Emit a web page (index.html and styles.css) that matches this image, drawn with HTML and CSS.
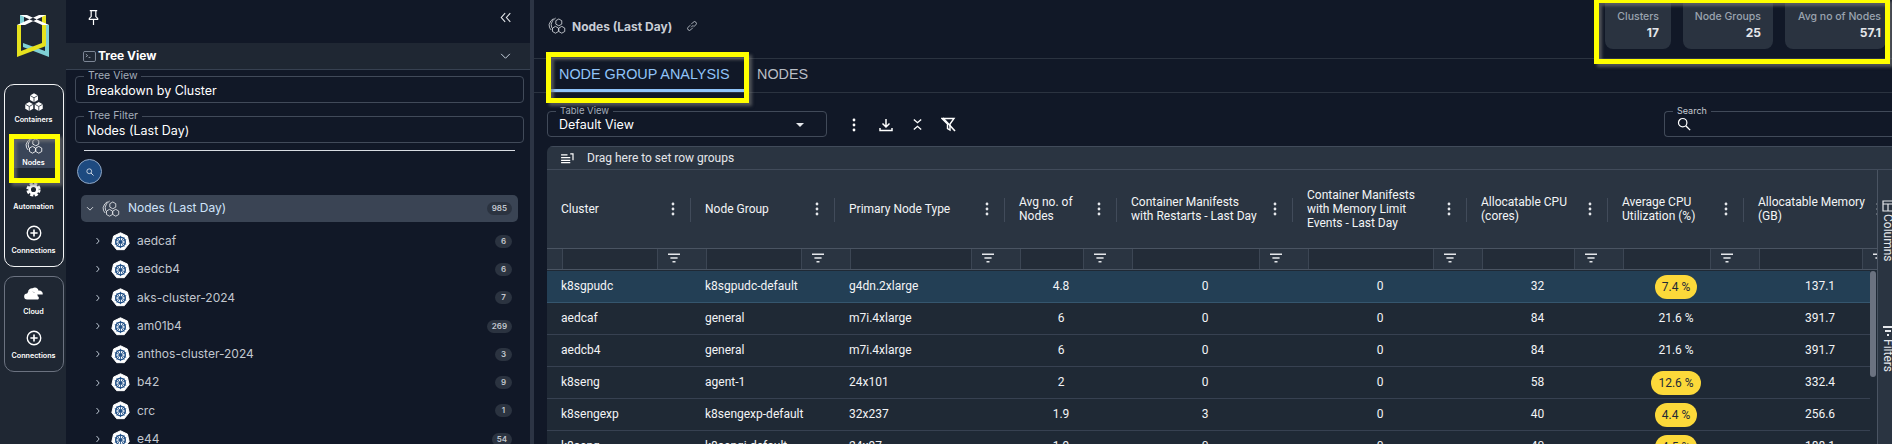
FILE: index.html
```html
<!DOCTYPE html>
<html lang="en">
<head>
<meta charset="utf-8">
<title>Nodes (Last Day)</title>
<link rel="stylesheet" href="styles.css">
</head>
<body>
<svg class="defs" width="0" height="0" aria-hidden="true">
  <symbol id="nodes" viewBox="0 0 20 20">
    <g fill="none" stroke="currentColor" stroke-width=".95">
      <path d="M6 1.800 3 4.500 1.200 8.500l.6 3.500 1.800 2.500"/>
      <path d="M8.500 1.200 5.200 3.800 3.500 8l.5 3.500 1.500 1.800"/>
      <path d="M12 2.200l3.300 1.900v3.800L12 9.800 8.700 7.900V4.100z"/>
      <path d="M8.300 10.400l3.300 1.900v3.800l-3.300 1.900L5 16.100v-3.800z"/>
      <path d="M15.300 10.400l3.300 1.900v3.800l-3.300 1.900-3.300-1.900v-3.800z"/>
    </g>
  </symbol>
  <symbol id="kube" viewBox="0 0 20 20">
    <path d="M10 .8 17.300 4.300 19.100 12.200 14 18.600H6L.9 12.200 2.700 4.300z" fill="#fff" stroke="#fff" stroke-linejoin="round"/>
    <g fill="none" stroke="#1f4e85">
      <circle cx="10" cy="10.500" r="5" stroke-width="1.600"/>
      <path d="M10 4v13M4 8l12 5M16 8 4 13M6 15.500l8-10M14 15.500l-8-10" stroke-width=".9"/>
    </g>
    <circle cx="10" cy="10.500" r="1.500" fill="#1f4e85"/>
  </symbol>
  <symbol id="plus" viewBox="0 0 20 20">
    <circle cx="10" cy="10" r="7.500" fill="none" stroke="currentColor" stroke-width="1.500"/>
    <path d="M10 6v8M6 10h8" stroke="currentColor" stroke-width="1.800"/>
  </symbol>
  <symbol id="dots" viewBox="0 0 4 14"><circle cx="2" cy="2" r="1.400" fill="currentColor"/><circle cx="2" cy="7" r="1.400" fill="currentColor"/><circle cx="2" cy="12" r="1.400" fill="currentColor"/></symbol>
  <symbol id="funnel" viewBox="0 0 12 10"><path d="M0 .5h12v1.600H0zM2.400 4.200h7.200v1.600H2.400zM4.500 7.900h3v1.600h-3z" fill="currentColor"/></symbol>
  <symbol id="chev-r" viewBox="0 0 8 10"><path d="M2 1l3.500 4L2 9" fill="none" stroke="currentColor" stroke-width="1.200"/></symbol>
  <symbol id="search" viewBox="0 0 16 16"><circle cx="6.500" cy="6.500" r="4.800" fill="none" stroke="currentColor" stroke-width="1.400"/><path d="M10 10l5 5" stroke="currentColor" stroke-width="1.600"/></symbol>
  <g id="cube">
    <path d="M0-4.800 4.200-2.400V2.400L0 4.800-4.200 2.400V-2.400z" fill="#fff"/>
    <path d="M0 0-4.200-2.400M0 0 4.200-2.400M0 0V4.800" stroke="#1f2733" stroke-width=".8" fill="none"/>
  </g>
</svg>

<nav class="rail">
  <svg class="logo" viewBox="0 0 32 43" width="32" height="43">
    <path d="M3 1h4v10H3zM28 10l4 1v32L6 33v-4l22 8z" fill="#7fd0d6"/>
    <path d="M0 11l4-1v27l21-8V1h4v31L0 43z" fill="#e6e21e"/>
    <path d="M3 1h7l22 10h-7zM29 1h-7L0 11h8z" fill="#fff"/>
  </svg>
  <div class="rail-box rail-box-main">
    <a class="rail-item rail-item-first">
      <svg class="rail-ico" viewBox="0 0 20 20" width="20" height="19">
        <use href="#cube" x="10" y="5"/>
        <use href="#cube" x="5" y="14.200"/>
        <use href="#cube" x="15" y="14.200"/>
      </svg>
      <span>Containers</span>
    </a>
    <a class="rail-item rail-item-on">
      <svg class="rail-ico" width="18" height="18"><use href="#nodes"/></svg>
      <span>Nodes</span>
    </a>
    <a class="rail-item rail-item-gear">
      <svg class="rail-ico" viewBox="0 0 20 20" width="15" height="15"><circle cx="10" cy="10" r="5.200" fill="none" stroke="#fff" stroke-width="3.600"/><circle cx="10" cy="10" r="8" fill="none" stroke="#fff" stroke-width="3" stroke-dasharray="4.200 2.080"/></svg>
      <span>Automation</span>
    </a>
    <a class="rail-item">
      <svg class="rail-ico" width="18" height="18"><use href="#plus"/></svg>
      <span>Connections</span>
    </a>
  </div>
  <div class="rail-box rail-box-sub">
    <a class="rail-item">
      <svg class="rail-ico" viewBox="0 0 20 16" width="19" height="15"><path d="M4 7.500A4.500 4.500 0 0 1 9 3.500 4 4 0 0 1 15.500 6 3.500 3.500 0 0 1 19.800 10H12A5 5 0 0 0 4 7.500z" fill="#fff"/><path d="M3.200 15.500a3.200 3.200 0 0 1 0-6.400 4 4 0 0 1 7.500-.5 3.500 3.500 0 0 1 3.800 3.400 2 2 0 0 1 .4 3.500z" fill="#fff"/></svg>
      <span>Cloud</span>
    </a>
    <a class="rail-item">
      <svg class="rail-ico" width="18" height="18"><use href="#plus"/></svg>
      <span>Connections</span>
    </a>
  </div>
</nav>

<aside class="tree">
  <div class="tree-top">
    <svg viewBox="0 0 14 18" width="13" height="17"><path d="M3 1.500h8M4.500 1.500v6.500L2.500 10v1h9v-1L9.500 8V1.500M7 11v6" fill="none" stroke="#fff" stroke-width="1.300"/></svg>
    <svg viewBox="0 0 14 12" width="12" height="11"><path d="M6 1 1.500 6 6 11M12 1 7.500 6 12 11" fill="none" stroke="#e5e7eb" stroke-width="1.300"/></svg>
  </div>
  <div class="tree-head">
    <svg viewBox="0 0 14 12" width="13" height="11"><rect x=".5" y=".5" width="13" height="11" rx="1.500" fill="none" stroke="#8a94a3"/><path d="M3 3.500 5 5 3 6.500M6 7h2" fill="none" stroke="#b4bcc8" stroke-width=".8"/></svg>
    <strong>Tree View</strong>
    <svg class="tree-head-chev" viewBox="0 0 12 8" width="11" height="7"><path d="M1 1l5 5 5-5" fill="none" stroke="#cbd5e1" stroke-width="1.100"/></svg>
  </div>
  <fieldset class="field tree-field"><legend>Tree View</legend>Breakdown by Cluster</fieldset>
  <fieldset class="field tree-field tree-field-2"><legend>Tree Filter</legend>Nodes (Last Day)</fieldset>
  <hr class="tree-rule">
  <button class="tree-search" aria-label="Search"><svg width="8" height="8"><use href="#search"/></svg></button>
  <div class="tree-root">
    <svg class="tree-root-chev" viewBox="0 0 10 8" width="8" height="6"><path d="M1 1.500l4 4 4-4" fill="none" stroke="#d1d5db" stroke-width="1.300"/></svg>
    <svg class="tree-root-ico" width="18" height="18"><use href="#nodes"/></svg>
    <span class="tree-label">Nodes (Last Day)</span>
    <span class="badge">985</span>
  </div>
  <ul class="tree-list">
    <li><svg class="tree-chev" width="6" height="8"><use href="#chev-r"/></svg><svg class="kube" width="19" height="19"><use href="#kube"/></svg><span class="tree-label">aedcaf</span><span class="badge">6</span></li>
    <li><svg class="tree-chev" width="6" height="8"><use href="#chev-r"/></svg><svg class="kube" width="19" height="19"><use href="#kube"/></svg><span class="tree-label">aedcb4</span><span class="badge">6</span></li>
    <li><svg class="tree-chev" width="6" height="8"><use href="#chev-r"/></svg><svg class="kube" width="19" height="19"><use href="#kube"/></svg><span class="tree-label">aks-cluster-2024</span><span class="badge">7</span></li>
    <li><svg class="tree-chev" width="6" height="8"><use href="#chev-r"/></svg><svg class="kube" width="19" height="19"><use href="#kube"/></svg><span class="tree-label">am01b4</span><span class="badge">269</span></li>
    <li><svg class="tree-chev" width="6" height="8"><use href="#chev-r"/></svg><svg class="kube" width="19" height="19"><use href="#kube"/></svg><span class="tree-label">anthos-cluster-2024</span><span class="badge">3</span></li>
    <li><svg class="tree-chev" width="6" height="8"><use href="#chev-r"/></svg><svg class="kube" width="19" height="19"><use href="#kube"/></svg><span class="tree-label">b42</span><span class="badge">9</span></li>
    <li><svg class="tree-chev" width="6" height="8"><use href="#chev-r"/></svg><svg class="kube" width="19" height="19"><use href="#kube"/></svg><span class="tree-label">crc</span><span class="badge">1</span></li>
    <li><svg class="tree-chev" width="6" height="8"><use href="#chev-r"/></svg><svg class="kube" width="19" height="19"><use href="#kube"/></svg><span class="tree-label">e44</span><span class="badge">54</span></li>
  </ul>
</aside>

<main class="main">
  <header class="topbar">
    <svg class="title-ico" width="18" height="18"><use href="#nodes"/></svg>
    <h1>Nodes (Last Day)</h1>
    <svg class="link-ico" viewBox="0 0 14 14" width="12" height="12"><path d="M6 8.500 8.500 6M5 6 2.500 8.500a2 2 0 0 0 3 3L8 9M6 5l2.500-2.500a2 2 0 0 1 3 3L9 8" fill="none" stroke="#c4cad3" stroke-width="1"/></svg>
    <div class="stats">
      <div class="stat"><span>Clusters</span><b>17</b></div>
      <div class="stat stat-groups"><span>Node Groups</span><b>25</b></div>
      <div class="stat stat-avg"><span>Avg no of Nodes</span><b>57.1</b></div>
    </div>
  </header>
  <div class="tabs">
    <a class="tab tab-on">NODE GROUP ANALYSIS</a>
    <a class="tab">NODES</a>
  </div>
  <div class="toolbar">
    <fieldset class="field view-field"><legend>Table View</legend>Default View<i class="caret"></i></fieldset>
    <div class="tools">
      <svg width="4" height="14"><use href="#dots"/></svg>
      <svg viewBox="0 0 14 14" width="14" height="14"><path d="M7 1v7M3.500 5.500 7 9l3.500-3.500M1 10v2.500h12V10" fill="none" stroke="#fff" stroke-width="1.500"/></svg>
      <svg viewBox="0 0 12 14" width="11" height="13"><path d="M2 1.500l4 3.500 4-3.500M2 12.500 6 9l4 3.500" fill="none" stroke="#fff" stroke-width="1.500"/></svg>
      <svg viewBox="0 0 15 15" width="15" height="15"><path d="M1 1.500h12L9 7v6L6.500 11.500V7z" fill="none" stroke="#fff" stroke-width="1.400"/><path d="M2 1l12 13" stroke="#fff" stroke-width="1.600"/></svg>
    </div>
    <fieldset class="field search-field"><legend>Search</legend><svg width="14" height="14"><use href="#search"/></svg></fieldset>
  </div>
  <section class="grid">
    <div class="grid-group">
      <svg viewBox="0 0 14 12" width="13" height="11"><path d="M0 2h7M0 5h10M0 8h10M0 10.500h10" stroke="#fff" stroke-width="1.300"/><path d="M10 1h3v7" fill="none" stroke="#fff" stroke-width="1.300"/></svg>
      <span>Drag here to set row groups</span>
    </div>
    <div class="grid-wrap">
      <div class="grid-table">
        <div class="cols grid-head">
          <div class="hcell"><span>Cluster</span><svg width="4" height="14"><use href="#dots"/></svg></div>
          <div class="hcell"><span>Node Group</span><svg width="4" height="14"><use href="#dots"/></svg></div>
          <div class="hcell"><span>Primary Node Type</span><svg width="4" height="14"><use href="#dots"/></svg></div>
          <div class="hcell"><span>Avg no. of<br>Nodes</span><svg width="4" height="14"><use href="#dots"/></svg></div>
          <div class="hcell"><span>Container Manifests<br>with Restarts - Last Day</span><svg width="4" height="14"><use href="#dots"/></svg></div>
          <div class="hcell"><span>Container Manifests<br>with Memory Limit<br>Events - Last Day</span><svg width="4" height="14"><use href="#dots"/></svg></div>
          <div class="hcell"><span>Allocatable CPU<br>(cores)</span><svg width="4" height="14"><use href="#dots"/></svg></div>
          <div class="hcell"><span>Average CPU<br>Utilization (%)</span><svg width="4" height="14"><use href="#dots"/></svg></div>
          <div class="hcell"><span>Allocatable Memory<br>(GB)</span><svg width="4" height="14"><use href="#dots"/></svg></div>
        </div>
        <div class="cols grid-filter">
          <div class="fcell"><i></i><b><svg width="12" height="10"><use href="#funnel"/></svg></b></div>
          <div class="fcell"><i></i><b><svg width="12" height="10"><use href="#funnel"/></svg></b></div>
          <div class="fcell"><i></i><b><svg width="12" height="10"><use href="#funnel"/></svg></b></div>
          <div class="fcell"><i></i><b><svg width="12" height="10"><use href="#funnel"/></svg></b></div>
          <div class="fcell"><i></i><b><svg width="12" height="10"><use href="#funnel"/></svg></b></div>
          <div class="fcell"><i></i><b><svg width="12" height="10"><use href="#funnel"/></svg></b></div>
          <div class="fcell"><i></i><b><svg width="12" height="10"><use href="#funnel"/></svg></b></div>
          <div class="fcell"><i></i><b><svg width="12" height="10"><use href="#funnel"/></svg></b></div>
          <div class="fcell"><i></i><b><svg width="12" height="10"><use href="#funnel"/></svg></b></div>
        </div>
        <div class="grid-body">
          <div class="rows">
            <div class="cols row row-on"><span>k8sgpudc</span><span>k8sgpudc-default</span><span>g4dn.2xlarge</span><span class="num">4.8</span><span class="num">0</span><span class="num">0</span><span class="num">32</span><span class="num"><em class="pill">7.4 %</em></span><span class="num">137.1</span></div>
            <div class="cols row"><span>aedcaf</span><span>general</span><span>m7i.4xlarge</span><span class="num">6</span><span class="num">0</span><span class="num">0</span><span class="num">84</span><span class="num">21.6 %</span><span class="num">391.7</span></div>
            <div class="cols row"><span>aedcb4</span><span>general</span><span>m7i.4xlarge</span><span class="num">6</span><span class="num">0</span><span class="num">0</span><span class="num">84</span><span class="num">21.6 %</span><span class="num">391.7</span></div>
            <div class="cols row"><span>k8seng</span><span>agent-1</span><span>24x101</span><span class="num">2</span><span class="num">0</span><span class="num">0</span><span class="num">58</span><span class="num"><em class="pill">12.6 %</em></span><span class="num">332.4</span></div>
            <div class="cols row"><span>k8sengexp</span><span>k8sengexp-default</span><span>32x237</span><span class="num">1.9</span><span class="num">3</span><span class="num">0</span><span class="num">40</span><span class="num"><em class="pill">4.4 %</em></span><span class="num">256.6</span></div>
            <div class="cols row"><span>k8seng</span><span>k8sengi-default</span><span>24x97</span><span class="num">1.9</span><span class="num">0</span><span class="num">0</span><span class="num">40</span><span class="num"><em class="pill">4.5 %</em></span><span class="num">188.1</span></div>
          </div>
          <div class="scroll"><i></i></div>
        </div>
      </div>
      <div class="side">
        <div class="side-tab side-cols">
          <svg viewBox="0 0 12 12" width="12" height="12"><path d="M1 1h10v10H1zM1 4h10M6 4v7" fill="none" stroke="#e5e7eb" stroke-width="1.200"/></svg>
          <span>Columns</span>
        </div>
        <div class="side-tab side-filters">
          <svg viewBox="0 0 12 12" width="12" height="12"><path d="M1 2h10M3 6h6M5 10h2" fill="none" stroke="#e5e7eb" stroke-width="1.800"/></svg>
          <span>Filters</span>
        </div>
      </div>
    </div>
  </section>
</main>

<div class="mark mark-nodes"></div>
<div class="mark mark-tab"></div>
<div class="mark mark-stats"></div>
</body>
</html>
```

FILE: styles.css
```css
* { box-sizing: border-box; }
html, body { height: 100%; }
body {
  margin: 0;
  height: 444px;
  overflow: hidden;
  display: flex;
  background: #111827;
  color: #fff;
  font: 13px/1.2 Inter, "Noto Sans", sans-serif;
  position: relative;
}
.defs { position: absolute; }
svg { display: block; flex: none; }

/* left rail */
.rail { width: 66px; flex: none; background: #1f2733; display: flex; flex-direction: column; align-items: center; }
.logo { margin: 14px 0 27px 0; }
.rail-box { width: 60px; border: 1px solid #f3f4f6; border-radius: 10px; display: flex; flex-direction: column; margin-left: 1px; padding-top: 7px; }
.rail-box-main { height: 183px; }
.rail-box-sub { height: 96px; margin-top: 9px; border-color: #6b7280; padding-top: 7px; }
.rail-item { display: flex; flex-direction: column; align-items: center; height: 45px; padding-top: 1px; color: #fff; font-size: 7.200px; font-weight: 600; margin: 0 4px; border-radius: 2px; }
.rail-item span { margin-top: 5px; }
.rail-item-first { height: 48px; }
.rail-item-first span { margin-top: 4px; }
.rail-item-on { background: #3a4558; height: 35px; margin-top: -4px; margin-bottom: 12px; padding-top: 3px; }
.rail-item-on span { margin-top: 4px; }
.rail-item-gear { padding-top: 2px; height: 44px; }
.rail-item-gear span { margin-top: 6px; }
.rail-box-sub .rail-item { height: 46px; }
.rail-box-sub .rail-item:first-child span { margin-top: 8px; }
.rail-ico { color: #fff; }

/* tree panel */
.tree { width: 464px; flex: none; display: flex; flex-direction: column; }
.tree-top { height: 43px; flex: none; display: flex; justify-content: space-between; align-items: center; padding: 0 18px 8px 21px; }
.tree-head { height: 27px; flex: none; background: #1f2733; display: flex; align-items: center; padding: 0 19px 0 17px; gap: 2px; border-bottom: 1px solid #374151; }
.tree-head strong { font-size: 12px; font-weight: 700; }
.tree-head-chev { margin-left: auto; }
.field { margin: 0; min-width: 0; padding: 0 11px; border: 1px solid #414a59; border-radius: 4px; color: #fff; font-size: 12.500px; line-height: 17px; }
.field legend { padding: 0 4px; margin-left: -3px; font-size: 10.500px; line-height: 12px; color: #a4adb9; height: 12px; }
.tree-field { width: 449px; height: 33px; margin: 0 0 0 9px; flex: none; }
.tree-field-2 { margin-top: 7px; }
.tree-rule { flex: none; width: 431px; height: 1px; margin: 7px 0 0 18px; border: 0; background: #d8dce2; }
.tree-search { flex: none; width: 25px; height: 25px; margin: 8px 0 0 11px; padding: 0; border-radius: 50%; border: 1px solid #8fa6c4; background: #1d4a80; color: #fff; display: flex; align-items: center; justify-content: center; }
.tree-root { flex: none; height: 27px; margin: 11px 12px 0 15px; display: flex; align-items: center; background: #3a4454; border-radius: 5px; padding: 0 6px 0 5px; }
.tree-root-chev { margin-right: 8px; }
.tree-root-ico { color: #e5e7eb; margin-right: 8px; }
.tree-root .tree-label { color: #cfe3fa; }
.tree-label { font-size: 12px; color: #c2c7cf; flex: 1; }
.badge { flex: none; min-width: 17px; height: 13px; padding: 0 5px; border-radius: 7px; background: #2b3340; color: #c2c7cf; font-size: 8px; font-weight: 600; line-height: 13px; text-align: center; }
.tree-list { list-style: none; margin: 5px 0 0; padding: 0 18px 0 29px; }
.tree-list li { height: 28.300px; display: flex; align-items: center; }
.tree-chev { color: #cbd5e1; margin-right: 10px; }
.kube { margin-right: 7px; }

/* main */
.main { flex: 1; min-width: 0; display: flex; flex-direction: column; border-left: 4px solid #2c3444; }
.topbar { height: 59px; flex: none; border-bottom: 1px solid #2b3340; display: flex; padding: 0 0 0 14px; align-items: flex-start; }
.title-ico { color: #d1d5db; margin: 17px 6px 0 0; }
.topbar h1 { margin: 19px 14px 0 0; font-size: 12px; line-height: 15px; font-weight: 700; color: #c8cdd5; }
.link-ico { margin-top: 20px; }
.stats { margin-left: auto; display: flex; gap: 12px; padding-right: 6px; }
.stat { height: 49px; width: 66px; background: #2a3340; border-radius: 0 0 8px 8px; padding: 10px 12px 0 0; display: flex; flex-direction: column; align-items: flex-end; }
.stat span { font-size: 10.500px; line-height: 14px; color: #9aa3af; font-weight: 500; white-space: nowrap; }
.stat b { font-size: 12px; line-height: 17px; color: #e5e7eb; font-weight: 700; }
.stat-groups { width: 90px; }
.stat-avg { width: 101px; padding-right: 5px; }
.tabs { height: 34px; flex: none; border-bottom: 1px solid #2b3340; display: flex; padding-left: 17px; font-family: "Liberation Sans", Arial, sans-serif; }
.tab { font-size: 14.400px; line-height: 30px; height: 33px; padding: 0 8px; color: #b9bec6; white-space: nowrap; }
.tab-on { color: #90c4f9; border-bottom: 3px solid #90c4f9; width: 198px; }
.toolbar { height: 53px; flex: none; display: flex; align-items: flex-start; padding: 12px 0 0 13px; }
.view-field { width: 280px; height: 32px; position: relative; line-height: 15px; }
.view-field legend { font-size: 9.500px; }
.caret { position: absolute; right: 22px; top: 6px; width: 0; height: 0; border: 4px solid transparent; border-top: 4px solid #e5e7eb; border-bottom: 0; }
.tools { display: flex; align-items: center; margin: 12px 0 0 25px; }
.tools svg:nth-child(2) { margin-left: 23px; }
.tools svg:nth-child(3) { margin-left: 19px; }
.tools svg:nth-child(4) { margin-left: 18px; }
.search-field { margin-left: auto; width: 232px; height: 32px; margin-right: -4px; padding-left: 12px; border-right: 0; border-radius: 4px 0 0 4px; }
.search-field legend { color: #c5cad2; font-size: 9px; margin-left: -4px; }

/* data grid */
.grid { flex: 1; min-height: 0; margin-left: 13px; display: flex; flex-direction: column; overflow: hidden; font-family: Roboto, sans-serif; font-size: 12px; border-radius: 6px 0 0 0; }
.grid-group { height: 24px; flex: none; background: #2a3441; border-top: 1px solid #414b5a; border-bottom: 1px solid #414b5a; display: flex; align-items: center; padding-left: 14px; gap: 13px; color: #e5e7eb; font-size: 12px; }
.grid-wrap { flex: 1; min-height: 0; display: flex; }
.grid-table { width: 1330px; flex: none; overflow: hidden; display: flex; flex-direction: column; }
.cols { display: grid; grid-template-columns: 144px 144px 170px 112px 176px 174px 141px 136px 152px; }
.grid-head { height: 79px; flex: none; background: #2a3441; border-bottom: 1px solid #4a5462; width: 1349px; }
.hcell { display: flex; align-items: center; padding: 0 0 0 14px; position: relative; color: #f3f4f6; line-height: 14px; white-space: nowrap; }
.hcell span { flex: 1; }
.hcell svg { color: #e5e7eb; margin-right: 16px; }
.hcell::after { content: ""; position: absolute; right: 0; top: 28px; height: 24px; width: 1px; background: #414b5a; }
.hcell:last-child::after { display: none; }
.grid-filter { height: 21px; flex: none; background: #2a3441; padding-left: 15px; border-bottom: 1px solid #4a5462; width: 1349px; }
.fcell { display: flex; }
.fcell i { flex: 1; background: #232c38; border-left: 1px solid #3c4654; }
.fcell b { width: 49px; flex: none; border-left: 1px solid #3c4654; background: #2a3441; padding: 4px 0 0 10px; color: #e5e7eb; }
.grid-body { flex: 1; min-height: 0; display: flex; background: #1f2935; }
.rows { width: 1323px; flex: none; overflow: hidden; padding-top: 1px; }
.row { height: 32px; align-items: center; border-bottom: 1px solid #374151; color: #f3f4f6; width: 1349px; }
.row > span { padding-left: 14px; }
.row-on { background: #233f55; border-bottom-color: #35566e; }
.row > .num { padding-left: 0; text-align: center; }
.pill { display: inline-block; height: 24px; line-height: 24px; padding: 0 7px; border-radius: 12px; background: #fcd93a; color: #1f2937; font-style: normal; }
.scroll { width: 7px; flex: none; background: #1f2935; }
.scroll i { display: block; width: 6px; height: 106px; margin-top: 1px; background: #6b7280; border-radius: 3px; }
.side { flex: 1; background: #2a3441; border-left: 1px solid #4a5462; display: flex; flex-direction: column; align-items: center; color: #e5e7eb; padding-left: 3px; }
.side-tab { display: flex; flex-direction: column; align-items: center; gap: 2px; }
.side-tab span { writing-mode: vertical-rl; font-size: 12px; line-height: 14px; }
.side-cols { margin-top: 30px; }
.side-filters { margin-top: 63px; }

/* yellow annotation frames, drawn over the shot */
.mark { position: absolute; border: 5px solid #ffff00; box-shadow: 3px 3px 3px rgba(120,120,120,.6), inset 3px 3px 3px rgba(120,120,120,.6); pointer-events: none; }
.mark-nodes { left: 9px; top: 134px; width: 51px; height: 49px; }
.mark-tab { left: 546px; top: 52px; width: 203px; height: 51px; }
.mark-stats { left: 1594px; top: -2px; width: 296px; height: 66px; }
```
